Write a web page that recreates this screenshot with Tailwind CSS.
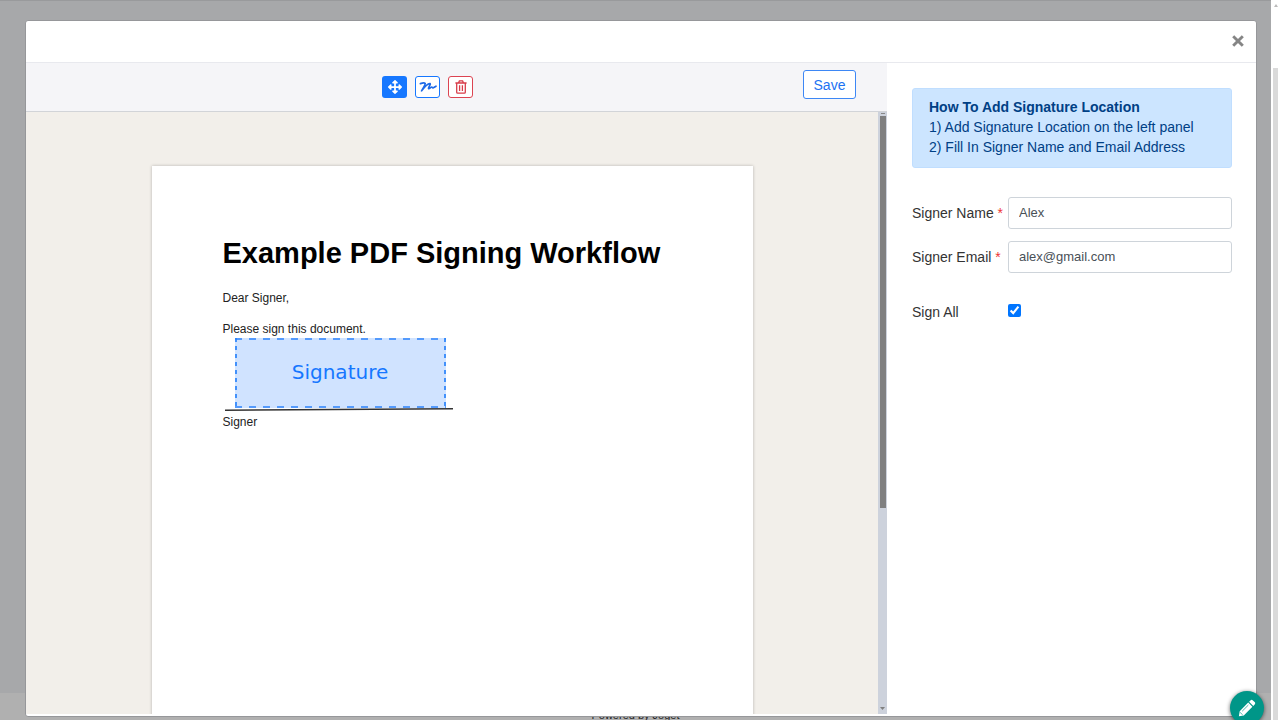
<!DOCTYPE html>
<html lang="en">
<head>
<meta charset="utf-8">
<meta name="viewport" content="width=device-width, initial-scale=1">
<title>Signature Setup</title>
<script src="https://cdn.jsdelivr.net/npm/@tailwindcss/browser@4"></script>
</head>
<body class="relative flex h-screen overflow-hidden bg-white font-['Liberation_Sans',Arial,sans-serif] text-sm text-[#333]">
  <div class="flex flex-1 flex-col border-t border-[#999a9c] bg-[#a7a8aa]">
    <footer class="mt-auto h-[27px] bg-[#b0b0b0] pt-4 text-center text-[11px] leading-3 text-[#222]">Powered by Joget</footer>
  </div>
  <div class="flex w-[9px] flex-col items-center bg-white" aria-hidden="true">
    <svg class="mt-1 h-[3px] w-1" viewBox="0 0 4 3"><path d="M2 0l2 3H0z" fill="#bbb"/></svg>
    <div class="mt-[61px] w-[5px] flex-1 bg-[#dadada]"></div>
  </div>

  <div role="dialog" aria-label="Signature setup" class="absolute top-5 right-[23px] bottom-[3px] left-[25px] flex flex-col overflow-hidden rounded-[3px] border border-[#96979a] bg-white pb-0.5">
    <header class="flex h-[42px] shrink-0 items-center justify-end border-b border-[#e8e9ee] pr-3 pb-0.5">
      <button type="button" aria-label="Close" class="text-[#858585]">
        <svg class="size-3" viewBox="0 0 12 12" fill="none" stroke="currentColor" stroke-width="2.9"><path d="M1.2 1.2l9.6 9.6M10.8 1.2l-9.6 9.6"/></svg>
      </button>
    </header>

    <div class="flex min-h-0 flex-1">
      <section class="flex w-[70%] flex-col">
        <div class="flex h-[49px] shrink-0 items-center border-b border-[#d2d4d8] bg-[#f5f5f8] pr-[31px]">
          <div class="ml-[42.9%] flex gap-2">
            <button type="button" aria-label="Move" class="flex h-[22px] w-[25px] items-center justify-center rounded-[3px] bg-[#1677ff] text-white">
              <svg class="size-[14px]" viewBox="0 0 512 512" fill="currentColor"><path d="M352 426l-79 79a24 24 0 0 1-34 0l-79-79c-15-15-5-41 17-41h47v-97h-97v47c0 22-26 32-41 17L7 273a24 24 0 0 1 0-34l79-79c15-15 41-5 41 17v47h97v-97h-47c-22 0-32-26-17-41l79-79a24 24 0 0 1 34 0l79 79c15 15 5 41-17 41h-47v97h97v-47c0-22 26-32 41-17l79 79a24 24 0 0 1 0 34l-79 79c-15 15-41 5-41-17v-47h-97v97h47c22 0 32 26 17 41z"/></svg>
            </button>
            <button type="button" aria-label="Add signature" class="flex h-[22px] w-[25px] items-center justify-center rounded-[3px] border border-[#1677ff] bg-white text-[#1f6be8]">
              <svg class="h-3 w-[18px]" viewBox="0 0 18 12" fill="none" stroke="currentColor" stroke-width="1.7" stroke-linecap="round" stroke-linejoin="round"><path d="M1.4 2.6C3 2 5.6 1.6 6.2 2.5C6.6 3.6 4 7 2.6 9.8C4.8 6.8 9 2.2 11 2.6C12.2 3.2 8.6 6.8 9.6 7.7C10.6 8.2 11.6 6 12.7 6C13.4 6 13.2 7 14 6.9C15 6.7 16 5.8 17 5.2"/></svg>
            </button>
            <button type="button" aria-label="Delete" class="flex h-[22px] w-[25px] items-center justify-center rounded-[3px] border border-[#dc4452] bg-white text-[#d83c49]">
              <svg class="h-[14px] w-3" viewBox="0 0 12 14" fill="none" stroke="currentColor" stroke-width="1.3"><path d="M.4 3h11.2M3.6 2.8l.8-1.9h3.2l.8 1.9M1.7 3v9.2c0 .6.4 1 1 1h6.6c.6 0 1-.4 1-1V3M4.6 5.2v5.9M7.4 5.2v5.9"/></svg>
            </button>
          </div>
          <button type="button" class="mb-[5px] ml-auto h-[29px] w-[53px] rounded-[3px] border border-[#3d87f5] bg-white text-sm text-[#1c72f2]">Save</button>
        </div>

        <div class="flex min-h-0 flex-1">
          <div class="flex flex-1 items-start justify-center overflow-hidden bg-[#f2efea] pt-[54px]">
            <article class="relative h-[850px] w-[601px] bg-white px-[71px] pt-[69px] text-xs leading-4 text-[#222] shadow-[0_0_3px_rgba(0,0,0,0.25)]">
              <h1 class="text-[29px] leading-9 font-bold whitespace-nowrap text-black">Example PDF Signing Workflow</h1>
              <p class="mt-[19px]">Dear Signer,</p>
              <p class="mt-[15px]">Please sign this document.</p>
              <svg class="mt-[70px] h-1 w-[230px]" viewBox="0 0 230 4" fill="none"><path d="M2 3.2L230 1.8" stroke="#333" stroke-width="1.5"/></svg>
              <p class="mt-[3px]">Signer</p>
              <div class="absolute top-[172px] left-[83px] flex h-[70px] w-[211px] items-center justify-center bg-[#d0e3ff] pb-[3px] font-['DejaVu_Sans',sans-serif] text-xl text-[#1677ff]">
                <svg class="absolute inset-0 size-full" viewBox="0 0 211 70" preserveAspectRatio="none" fill="none" stroke="#2b83fb"><path d="M0 1h211M0 69h211" stroke-width="1.5" stroke-dasharray="7 7"/><path d="M1 0v70M210 0v70" stroke-width="1.7" stroke-dasharray="4 4"/></svg>
                <span class="relative">Signature</span>
              </div>
            </article>
          </div>
          <div class="flex w-[9px] flex-col items-center bg-[#cdd2dc]" aria-hidden="true">
            <div class="mt-px h-px w-1 bg-[#888]"></div>
            <div class="mt-0.5 h-[392px] w-1.5 bg-[#808080]"></div>
            <svg class="mt-auto mb-1 h-[3px] w-[5px]" viewBox="0 0 5 3"><path d="M0 0h5L2.5 3z" fill="#808080"/></svg>
          </div>
        </div>
      </section>

      <aside class="flex-1 bg-white pt-[25px] pr-6 pl-[25px]">
        <div class="rounded-[3px] border border-[#c0deff] bg-[#cce5ff] px-4 pt-2 pb-[10px] leading-5 text-[#004085]">
          <h2 class="font-bold">How To Add Signature Location</h2>
          <p>1) Add Signature Location on the left panel</p>
          <p>2) Fill In Signer Name and Email Address</p>
        </div>
        <form class="mt-[29px] flex flex-col gap-3">
          <div class="flex items-center">
            <label for="name" class="w-24 shrink-0 whitespace-nowrap">Signer Name <span class="text-[#e33]">*</span></label>
            <input id="name" type="text" value="Alex" class="h-8 min-w-0 flex-1 rounded-[3px] border border-[#ced4da] bg-white px-2.5 pb-0.5 text-[13px] text-[#495057]">
          </div>
          <div class="flex items-center">
            <label for="email" class="w-24 shrink-0 whitespace-nowrap">Signer Email <span class="text-[#e33]">*</span></label>
            <input id="email" type="email" value="alex@gmail.com" class="h-8 min-w-0 flex-1 rounded-[3px] border border-[#ced4da] bg-white px-2.5 pb-0.5 text-[13px] text-[#495057]">
          </div>
          <div class="mt-[17px] flex items-center">
            <label for="all" class="w-24 shrink-0">Sign All</label>
            <input id="all" type="checkbox" checked class="mb-1 size-[13px] accent-[#0075ff]">
          </div>
        </form>
      </aside>
    </div>
  </div>

  <button type="button" aria-label="Edit" class="absolute right-4 -bottom-[5px] flex size-[34px] items-center justify-center rounded-full bg-[#009688] text-white shadow-[0_1px_4px_rgba(0,0,0,0.6)]">
    <svg class="size-[18px]" viewBox="0 0 18 18" fill="currentColor"><path d="M12.4 1.4c.8-.8 1.7-.8 2.5 0l1.7 1.7c.8.8.8 1.7 0 2.5l-1.3 1.3-4.2-4.2zM10.2 3.6l4.2 4.2-8.6 8.6-4.9.8.8-5z"/><path d="M4.2 12.2l6.2-6.2M2.1 13.4l2.6 2.5" stroke="#009688" stroke-width=".7" fill="none"/></svg>
  </button>
</body>
</html>
